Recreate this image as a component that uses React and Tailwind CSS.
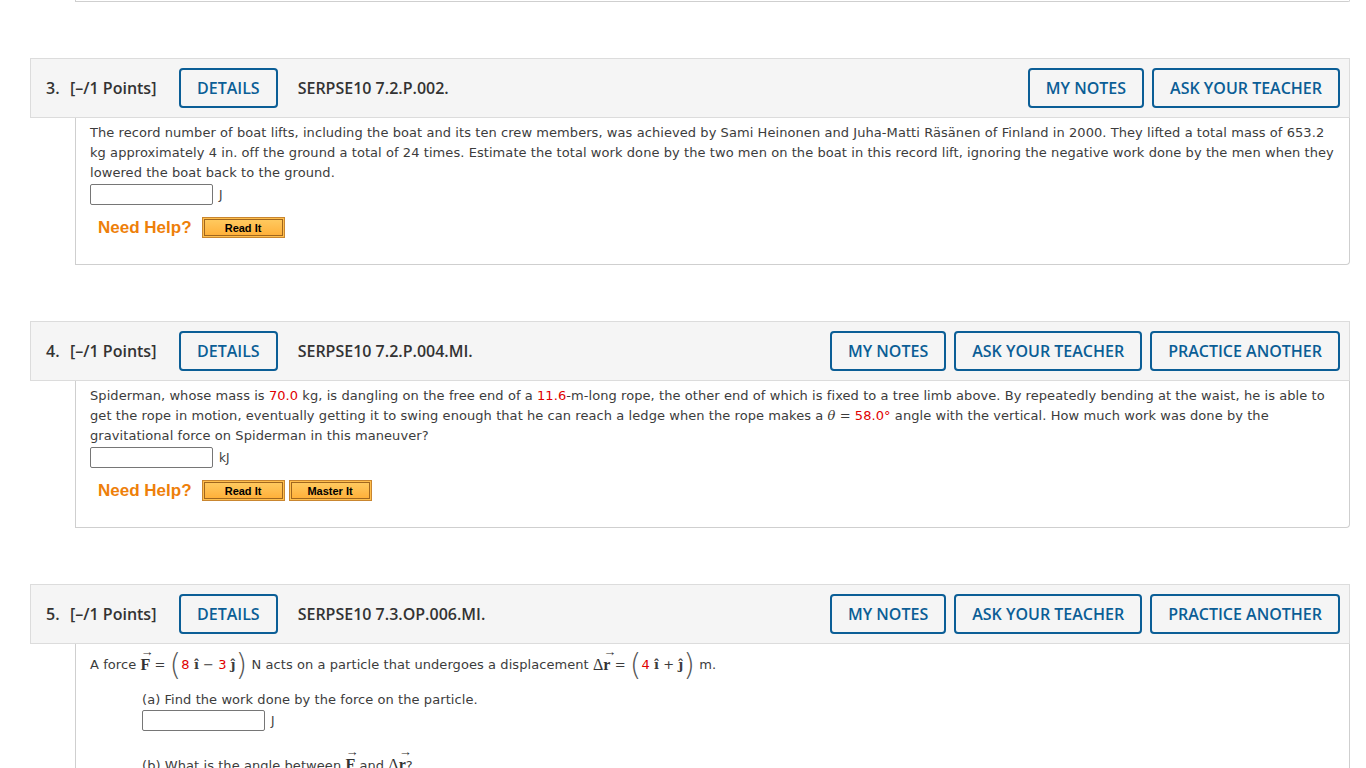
import React from "react";

const headFont = { fontFamily: '"Open Sans", "Liberation Sans", sans-serif' };

function BlueButton({ children }) {
	return (
		<button
			className="h-[40px] px-[16px] border-2 border-[#0b5e96] rounded-[4px] text-[#0b5e96] text-[16px] font-semibold bg-[#f5f5f5] whitespace-nowrap"
			style={headFont}
		>
			{children}
		</button>
	);
}

function OrangeButton({ children, w }) {
	return (
		<div className={`h-[21px] ${w} border border-[#c98630] bg-[#ffbf4d] p-[1px]`}>
			<div className="h-full w-full border border-[#a0661e] bg-gradient-to-b from-[#ffc95e] to-[#ffb13a] flex items-center justify-center text-[11px] font-bold text-black [font-family:'Liberation_Sans',Arial,sans-serif]">
				{children}
			</div>
		</div>
	);
}

function Header({ num, code, practice }) {
	return (
		<div
			className="h-[60px] border border-[#dcdcdc] bg-[#f5f5f5] flex items-center pl-[15px] pr-[9px] text-[#333]"
			style={headFont}
		>
			<span className="font-semibold text-[16px] w-[24px]">{num}.</span>
			<span className="font-semibold text-[16px] w-[109px]">[–/1 Points]</span>
			<BlueButton>DETAILS</BlueButton>
			<span className="font-semibold text-[16px] ml-[20px]">{code}</span>
			<div className="ml-auto flex gap-[8px]">
				<BlueButton>MY NOTES</BlueButton>
				<BlueButton>ASK YOUR TEACHER</BlueButton>
				{practice && <BlueButton>PRACTICE ANOTHER</BlueButton>}
			</div>
		</div>
	);
}

function Answer({ unit, indent }) {
	return (
		<div className={`flex items-center h-[21px] ${indent || ""}`}>
			<div className="w-[123px] h-[21px] border border-[#767676] rounded-[2px] bg-white"></div>
			<span className="ml-[6px] text-[12px]">{unit}</span>
		</div>
	);
}

function NeedHelp({ master }) {
	return (
		<div className="flex items-center h-[21px] mt-[12px] pl-[8px] tracking-normal">
			<span className="text-[17px] font-bold text-[#ee7f0a] mr-[10px] [font-family:'Liberation_Sans',Arial,sans-serif]">
				Need Help?
			</span>
			<OrangeButton w="w-[83px]">Read It</OrangeButton>
			{master && (
				<div className="ml-[4px]">
					<OrangeButton w="w-[83px]">Master It</OrangeButton>
				</div>
			)}
		</div>
	);
}

function Body({ children }) {
	return (
		<div className="ml-[45px] border-x border-b border-[#cfcfcf] rounded-br-[4px] pt-[5px] pb-[26px] pl-[14px] pr-[12px] text-[13px] leading-[20px] tracking-[0.07px] text-[#3c3c3c] [font-family:'DejaVu_Sans',Verdana,sans-serif]">
			{children}
		</div>
	);
}

const Red = ({ children }) => <span className="text-[#e10000]">{children}</span>;

function Vec({ children }) {
	return (
		<span className="relative inline-block [font-family:'Liberation_Serif',serif] text-[16px] font-bold text-[#333] leading-[20px] tracking-normal">
			{children}
			<span className="absolute left-[0px] top-[-10px] text-[13px] font-bold leading-none">→</span>
		</span>
	);
}

const Paren = ({ children }) => (
	<span className="inline-block [font-family:'DejaVu_Sans',sans-serif] text-[30px] font-extralight leading-none text-[#555] tracking-normal">
		{children}
	</span>
);

const Hat = ({ children }) => (
	<span className="[font-family:'DejaVu_Serif',serif] font-bold text-[13px]">{children}</span>
);

const Delta = () => (
	<span className="[font-family:'Liberation_Serif',serif] text-[16px] text-[#333]">Δ</span>
);

export default function App() {
	return (
		<div className="min-h-screen bg-white">
			<div className="ml-[30px] w-[1320px]">
				<div className="ml-[45px] h-[2px] border-x border-b border-[#cfcfcf] rounded-br-[4px]"></div>

				<div className="mt-[56px]">
					<Header num="3" code="SERPSE10 7.2.P.002." />
					<Body>
						<p>
							The record number of boat lifts, including the boat and its ten crew members, was achieved by Sami Heinonen and Juha-Matti Räsänen of Finland in 2000. They lifted a total mass of 653.2 kg approximately 4 in. off the ground a total of 24 times. Estimate the total work done by the two men on the boat in this record lift, ignoring the negative work done by the men when they lowered the boat back to the ground.
						</p>
						<div className="mt-[1px]">
							<Answer unit="J" />
						</div>
						<NeedHelp />
					</Body>
				</div>

				<div className="mt-[56px]">
					<Header num="4" code="SERPSE10 7.2.P.004.MI." practice />
					<Body>
						<p>
							Spiderman, whose mass is <Red>70.0</Red> kg, is dangling on the free end of a <Red>11.6</Red>-m-long rope, the other end of which is fixed to a tree limb above. By repeatedly bending at the waist, he is able to get the rope in motion, eventually getting it to swing enough that he can reach a ledge when the rope makes a{" "}
							<span className="italic [font-family:'DejaVu_Serif',serif]">θ</span> = <Red>58.0°</Red> angle with the vertical. How much work was done by the gravitational force on Spiderman in this maneuver?
						</p>
						<div className="mt-[1px]">
							<Answer unit="kJ" />
						</div>
						<NeedHelp master />
					</Body>
				</div>

				<div className="mt-[56px]">
					<Header num="5" code="SERPSE10 7.3.OP.006.MI." practice />
					<Body>
						<div className="h-[32px] flex items-center whitespace-nowrap">
							<span>A force&nbsp;</span>
							<Vec>F</Vec>
							<span>&nbsp;=&nbsp;</span>
							<Paren>(</Paren>
							<Red>8</Red>&nbsp;<Hat>î</Hat>&nbsp;−&nbsp;<Red>3</Red>&nbsp;<Hat>ĵ</Hat>
							<Paren>)</Paren>
							<span>&nbsp;N acts on a particle that undergoes a displacement&nbsp;</span>
							<Delta />
							<Vec>r</Vec>
							<span>&nbsp;=&nbsp;</span>
							<Paren>(</Paren>
							<Red>4</Red>&nbsp;<Hat>î</Hat>&nbsp;+&nbsp;<Hat>ĵ</Hat>
							<Paren>)</Paren>
							<span>&nbsp;m.</span>
						</div>
						<div className="pl-[52px] mt-[9px]">
							<p>(a) Find the work done by the force on the particle.</p>
							<Answer unit="J" />
							<p className="mt-[24px]">
								(b) What is the angle between <Vec>F</Vec> and <Delta />
								<Vec>r</Vec>?
							</p>
							<p className="mt-[4px]">°</p>
							<div className="h-[80px]"></div>
						</div>
					</Body>
				</div>
			</div>
		</div>
	);
}
